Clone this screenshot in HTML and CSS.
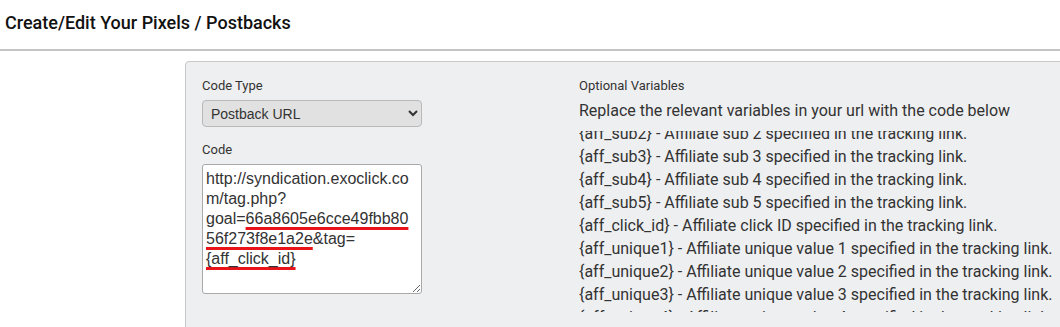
FILE: index.html
```html
<!DOCTYPE html>
<html lang="en">
<head>
<meta charset="UTF-8">
<meta name="viewport" content="width=device-width, initial-scale=1.0">
<title>Create/Edit Your Pixels / Postbacks</title>
<link rel="stylesheet" href="styles.css">
</head>
<body>

<div class="page-header">
  <h1>Create/Edit Your Pixels / Postbacks</h1>
</div>

<div class="panel">
  <div class="col-left">
    <label for="codeType" class="field-label">Code Type</label>
    <select id="codeType" class="code-select">
      <option>Postback URL</option>
      <option>Image Pixel</option>
      <option>JavaScript</option>
    </select>

    <label class="field-label label-code">Code</label>
    <div class="code-box">http://syndication.exoclick.com/tag.php?goal=<span class="mark">66a8605e6cce49fbb8056f273f8e1a2e</span>&amp;tag=<span class="mark">{aff_click_id}</span></div>
  </div>

  <div class="col-right">
    <div class="field-label">Optional Variables</div>
    <p class="intro">Replace the relevant variables in your url with the code below</p>
    <div class="var-scroll">
      <ul class="var-list">
        <li>{aff_sub1} - Affiliate sub 1 specified in the tracking link.</li>
        <li>{aff_sub2} - Affiliate sub 2 specified in the tracking link.</li>
        <li>{aff_sub3} - Affiliate sub 3 specified in the tracking link.</li>
        <li>{aff_sub4} - Affiliate sub 4 specified in the tracking link.</li>
        <li>{aff_sub5} - Affiliate sub 5 specified in the tracking link.</li>
        <li>{aff_click_id} - Affiliate click ID specified in the tracking link.</li>
        <li>{aff_unique1} - Affiliate unique value 1 specified in the tracking link.</li>
        <li>{aff_unique2} - Affiliate unique value 2 specified in the tracking link.</li>
        <li>{aff_unique3} - Affiliate unique value 3 specified in the tracking link.</li>
        <li>{aff_unique4} - Affiliate unique value 4 specified in the tracking link.</li>
        <li>{aff_unique5} - Affiliate unique value 5 specified in the tracking link.</li>
      </ul>
    </div>
  </div>
</div>

</body>
</html>
```

FILE: styles.css
```css
body {
  font-family: Roboto, "Liberation Sans", sans-serif;
  margin: 0;
  padding: 0;
  background-color: #fff;
  color: #333;
  overflow: hidden;
}

.page-header {
  height: 49px;
  border-bottom: 2px solid #c4c4c4;
  padding: 0 5px;
}

.page-header h1 {
  margin: 0;
  font-size: 18px;
  font-weight: 500;
  line-height: 45px;
  color: #111;
}

.panel {
  display: grid;
  grid-template-columns: 220px 1fr;
  column-gap: 157px;
  margin: 10px 0 0 185px;
  width: 920px;
  padding: 15px 16px 30px;
  background-color: #eeeff1;
  border: 1px solid #c8c8c8;
  border-radius: 4px;
}

.col-left {
  display: flex;
  flex-direction: column;
}

.field-label {
  display: block;
  font-size: 13px;
  line-height: 18px;
  color: #333;
  margin-bottom: 5px;
}

.label-code {
  margin-top: 14px;
  margin-bottom: 5px;
}

.code-select {
  height: 27px;
  width: 220px;
  padding: 0 4px;
  font-family: "Liberation Sans", Arial, sans-serif;
  font-size: 14px;
  color: #333;
  background-color: #e1e1e1;
  border: 1px solid #b9b9b9;
  border-radius: 4px;
}

.code-box {
  box-sizing: border-box;
  height: 130px;
  width: 220px;
  padding: 4px 4px 4px 3px;
  font-family: "Liberation Sans", Arial, sans-serif;
  font-size: 16px;
  line-height: 20px;
  color: #333;
  background-color: #fff;
  border: 1px solid #a9a9a9;
  border-radius: 3px;
  white-space: pre-wrap;
  overflow-wrap: break-word;
  overflow: auto;
  resize: both;
}

.mark {
  text-decoration: underline;
  text-decoration-color: #e8141a;
  text-decoration-thickness: 3px;
  text-underline-offset: 3px;
  text-decoration-skip-ink: none;
}

.intro {
  margin: 4px 0 0;
  font-size: 16px;
  line-height: 22px;
  color: #333;
}

.var-scroll {
  margin-top: 9px;
  height: 181px;
  overflow: hidden;
}

.var-list {
  list-style: none;
  margin: -32px 0 0;
  padding: 0;
  font-size: 16px;
  line-height: 23px;
  color: #333;
  white-space: nowrap;
}
```
